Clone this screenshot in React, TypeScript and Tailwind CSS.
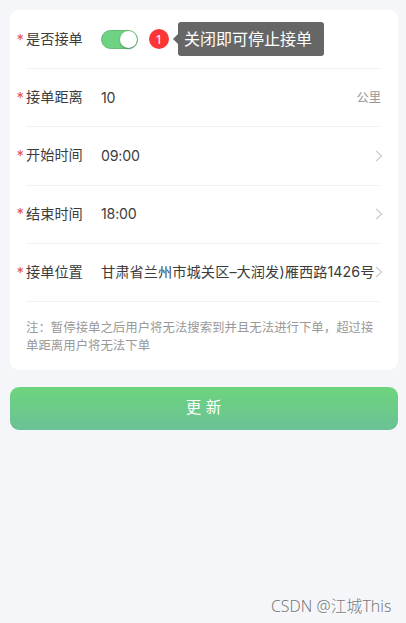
import type { ReactNode } from "react";

type FormRowProps = {
  label: string;
  children: ReactNode;
};

function FormRow({ label, children }: FormRowProps) {
  return (
    <div className="flex h-[58.25px] items-center border-b border-[#f1f2f3] text-[14.2px] text-[#3c3c3c]">
      <span className="-ml-[9.5px] w-[9.5px] shrink-0 pt-px font-['Inter'] text-[15px] text-[#e4574f]">
        *
      </span>
      <span className="w-[75px] shrink-0">{label}</span>
      {children}
    </div>
  );
}

function ArrowIcon() {
  return (
    <svg
      className="-mr-[2px] ml-auto h-3 w-2 shrink-0"
      viewBox="0 0 8 12"
      fill="none"
      stroke="#c9c9c9"
      strokeWidth="1.1"
    >
      <path d="M1.2 1 6.6 6 1.2 11" />
    </svg>
  );
}

function App() {
  return (
    <div className="flex h-[623px] w-[406px] flex-col bg-[#f4f6f9] pt-[10px] pr-[8.5px] pl-[9.5px] font-['Liberation_Sans','Noto_Sans_CJK_SC',sans-serif]">
      <div className="h-[360px] rounded-[9px] bg-white pt-[0.8px] pr-[16.5px] pl-[16.5px]">
        <FormRow label="是否接单">
          <div className="flex h-[19px] w-[37px] items-center justify-end rounded-full border border-[#66bb78] bg-[#6dd281]">
            <span className="h-[17px] w-[17px] rounded-full bg-white shadow-[0_1px_2px_rgba(0,0,0,0.3)]"></span>
          </div>
          <span className="ml-[11px] flex h-5 w-5 items-center justify-center rounded-full bg-[#fc3636] font-['Noto_Sans'] text-[13px] text-white">
            1
          </span>
          <div className="ml-1 flex items-center">
            <span className="h-0 w-0 border-y-[5px] border-r-[5px] border-y-transparent border-r-[#666]"></span>
            <span className="flex h-[34px] w-[146px] items-center rounded-[3px] bg-[#666] pt-[2px] pl-[6px] text-[16px] text-white">
              关闭即可停止接单
            </span>
          </div>
        </FormRow>
        <FormRow label="接单距离">
          <span className="pb-px font-['Inter'] tracking-[-0.2px]">10</span>
          <span className="ml-auto pt-px text-[12.3px] text-[#999]">公里</span>
        </FormRow>
        <FormRow label="开始时间">
          <span className="pb-px font-['Inter'] tracking-[-0.2px]">09:00</span>
          <ArrowIcon />
        </FormRow>
        <FormRow label="结束时间">
          <span className="pb-px font-['Inter'] tracking-[-0.2px]">18:00</span>
          <ArrowIcon />
        </FormRow>
        <FormRow label="接单位置">
          <span className="pb-px font-['Inter','Noto_Sans_CJK_SC',sans-serif] tracking-[0.08px] whitespace-nowrap">
            甘肃省兰州市城关区–大润发)雁西路1426号
          </span>
          <ArrowIcon />
        </FormRow>
        <p className="pt-[17px] text-[12.42px] leading-[18.3px] whitespace-nowrap text-[#999]">
          注：暂停接单之后用户将无法搜索到并且无法进行下单，超过接
          <br />
          单距离用户将无法下单
        </p>
      </div>
      <button className="mt-[16.5px] h-[43px] rounded-[9px] bg-linear-to-b from-[#6dd57c] to-[#6bc195] text-[15.5px] text-white">
        更 新
      </button>
      <p className="mt-auto mr-[6px] mb-[4px] text-right font-['Noto_Sans','Noto_Sans_CJK_SC',sans-serif] text-[15.9px] font-light text-[#77797b] [text-shadow:1px_1px_0_#fff]">
        CSDN @江城This
      </p>
    </div>
  );
}

export default App;
